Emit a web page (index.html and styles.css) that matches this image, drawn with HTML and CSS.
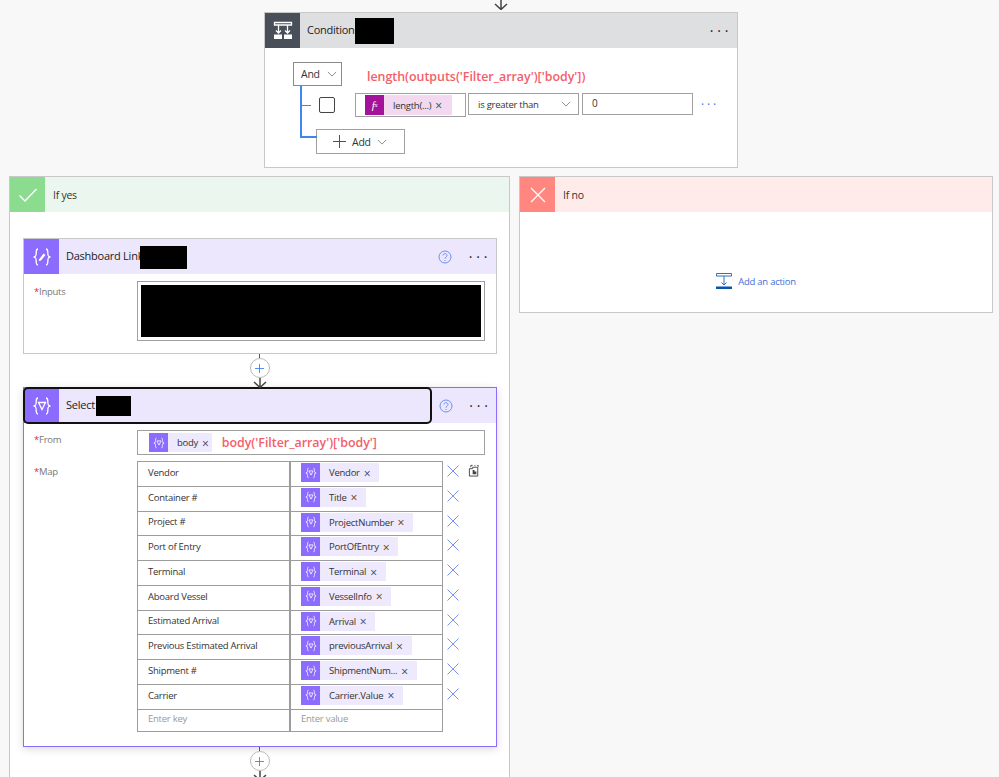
FILE: index.html
```html
<!DOCTYPE html>
<html lang="en">
<head>
    <meta charset="UTF-8">
    <title>Flow editor</title>
    <link rel="stylesheet" href="styles.css">
</head>
<body>

<div class="canvas">
    <svg class="arrow top-arrow" viewBox="0 0 16 10"><path d="M8 0V9M2 4l6 5.500 6-5.500"/></svg>

    <!-- condition -->
    <div class="card condition-card">
        <div class="card-head grey-head">
            <div class="head-icon dark-icon">
                <svg viewBox="0 0 20 20" width="20" height="20"><path class="white-line" d="M1.500 1.500H18.500V4H1.500ZM5.500 4V12M14.500 4V12M3 9.500l2.500 2.500 2.500-2.500M12 9.500l2.500 2.500 2.500-2.500"/><path class="white-fill" d="M1 13.500H9V18H1ZM11 13.500H19V18H11Z"/></svg>
            </div>
            <span class="head-title">Condition</span>
            <div class="redact redact-condition"></div>
            <div class="dots">&middot;&middot;&middot;</div>
        </div>
        <div class="condition-body">
            <div class="and-row">
                <div class="and-box">And <svg class="chev" viewBox="0 0 12 7"><path d="M1 1l5 5 5-5"/></svg></div>
                <div class="red-note cond-note">length(outputs('Filter_array')['body'])</div>
            </div>
            <div class="rule-row">
                <div class="tree-tick"></div>
                <div class="check"></div>
                <div class="rule-input">
                    <div class="chip fx-chip">
                        <span class="chip-icon fx-icon">f<sub>x</sub></span>
                        <span class="chip-text">length(...)</span>
                        <span class="chip-x">&times;</span>
                    </div>
                </div>
                <div class="rule-select">is greater than <svg class="chev" viewBox="0 0 12 7"><path d="M1 1l5 5 5-5"/></svg></div>
                <div class="rule-value">0</div>
                <div class="rule-dots">&middot;&middot;&middot;</div>
            </div>
            <div class="add-row">
                <div class="add-box">
                    <svg class="plus" viewBox="0 0 14 14"><path d="M7 0V14M0 7H14"/></svg>
                    Add
                    <svg class="chev" viewBox="0 0 12 7"><path d="M1 1l5 5 5-5"/></svg>
                </div>
            </div>
        </div>
    </div>

    <div class="branches">
        <!-- yes side -->
        <div class="branch branch-yes">
            <div class="branch-head yes-head">
                <div class="head-icon yes-icon">
                    <svg viewBox="0 0 20 20" width="20" height="20"><path class="white-line" d="M1.500 10.500L7 16 18.500 4"/></svg>
                </div>
                <span class="branch-title">If yes</span>
            </div>
            <div class="branch-body">
                <div class="card action-card dashboard-card">
                    <div class="card-head purple-head">
                        <div class="head-icon purple-icon">
                            <svg viewBox="0 0 20 20" width="20" height="20"><path class="white-line" d="M6 2C3.500 2 4.500 5 4 8 3.800 9.200 3 10 1.500 10 3 10 3.800 10.800 4 12 4.500 15 3.500 18 6 18M14 2C16.500 2 15.500 5 16 8 16.200 9.200 17 10 18.500 10 17 10 16.200 10.800 16 12 15.500 15 16.500 18 14 18"/><path class="white-fill" d="M7 12.500L11.500 6.500 13.500 8 9 13.500 6.800 14Z"/></svg>
                        </div>
                        <span class="head-title">Dashboard Link</span>
                        <div class="redact redact-dashboard"></div>
                        <svg class="help" viewBox="0 0 14 14"><circle cx="7" cy="7" r="6"/><path d="M5 5.500C5 3 9 3 9 5.500 9 7 7 7 7 8.800M7 10v1"/></svg>
                        <div class="dots">&middot;&middot;&middot;</div>
                    </div>
                    <div class="inputs-body">
                        <div class="field-label"><span class="star">*</span>Inputs</div>
                        <div class="inputs-box"><div class="redact-inputs"></div></div>
                    </div>
                </div>

                <div class="connector">
                    <div class="stem"></div>
                    <div class="add-circle"><svg viewBox="0 0 10 10"><path d="M5 0V10M0 5H10"/></svg></div>
                    <svg class="arrow" viewBox="0 0 16 10"><path d="M8 0V9M2 4l6 5.500 6-5.500"/></svg>
                </div>

                <div class="card action-card select-card">
                    <div class="card-head purple-head select-head">
                        <div class="select-focus">
                            <div class="head-icon purple-icon">
                                <svg viewBox="0 0 20 20" width="20" height="20"><path class="white-line" d="M6 2C3.500 2 4.500 5 4 8 3.800 9.200 3 10 1.500 10 3 10 3.800 10.800 4 12 4.500 15 3.500 18 6 18M14 2C16.500 2 15.500 5 16 8 16.200 9.200 17 10 18.500 10 17 10 16.200 10.800 16 12 15.500 15 16.500 18 14 18M6.500 6.500H13.500L10 13.500Z"/></svg>
                            </div>
                            <span class="head-title">Select</span>
                            <div class="redact redact-select"></div>
                        </div>
                        <svg class="help" viewBox="0 0 14 14"><circle cx="7" cy="7" r="6"/><path d="M5 5.500C5 3 9 3 9 5.500 9 7 7 7 7 8.800M7 10v1"/></svg>
                        <div class="dots">&middot;&middot;&middot;</div>
                    </div>
                    <div class="select-body">
                        <div class="field-row">
                            <div class="field-label"><span class="star">*</span>From</div>
                            <div class="from-box">
                                <div class="chip">
                                    <span class="chip-icon"><svg viewBox="0 0 20 20" width="12" height="12"><path class="white-line" d="M6 2C3.500 2 4.500 5 4 8 3.800 9.200 3 10 1.500 10 3 10 3.800 10.800 4 12 4.500 15 3.500 18 6 18M14 2C16.500 2 15.500 5 16 8 16.200 9.200 17 10 18.500 10 17 10 16.200 10.800 16 12 15.500 15 16.500 18 14 18M6.500 6.500H13.500L10 13.500Z"/></svg></span>
                                    <span class="chip-text">body</span>
                                    <span class="chip-x">&times;</span>
                                </div>
                                <span class="red-note from-note">body('Filter_array')['body']</span>
                            </div>
                        </div>
                        <div class="field-row map-row">
                            <div class="field-label map-label"><span class="star">*</span>Map</div>
                            <div class="map-wrap">
                                <div class="map-table" id="map-table"></div>
                                <div class="map-actions" id="map-actions"></div>
                                <svg class="copy-icon" viewBox="0 0 14 14"><path d="M3 3.500V1.500H5M7 1.500H8M10 1.500H11V3M1.500 5V13H10.500V3.500H5V5Z"/><path class="copy-fill" d="M5 6.500H7V11H5ZM7 8H9V11H7Z"/></svg>
                            </div>
                        </div>
                    </div>
                </div>

                <div class="connector bottom-connector">
                    <div class="stem"></div>
                    <div class="add-circle"><svg viewBox="0 0 10 10"><path d="M5 0V10M0 5H10"/></svg></div>
                    <svg class="arrow" viewBox="0 0 16 10"><path d="M8 0V9M2 4l6 5.500 6-5.500"/></svg>
                </div>
            </div>
        </div>

        <!-- no side -->
        <div class="branch branch-no">
            <div class="branch-head no-head">
                <div class="head-icon no-icon">
                    <svg viewBox="0 0 20 20" width="20" height="20"><path class="white-line" d="M3 3L17 17M17 3L3 17"/></svg>
                </div>
                <span class="branch-title">If no</span>
            </div>
            <div class="no-body">
                <div class="add-action">
                    <svg viewBox="0 0 16 16" width="16" height="16"><path class="blue-line" d="M.500.500H15.500V3H.500ZM8 3V11.500M5.500 9.500L8 12 10.500 9.500"/><path class="blue-fill" d="M0 13.500H16V16H0Z"/></svg>
                    <span>Add an action</span>
                </div>
            </div>
        </div>
    </div>
</div>

<script>
    //rows of the map table: key, value
    const rows = [
        ['Vendor', 'Vendor'],
        ['Container #', 'Title'],
        ['Project #', 'ProjectNumber'],
        ['Port of Entry', 'PortOfEntry'],
        ['Terminal', 'Terminal'],
        ['Aboard Vessel', 'VesselInfo'],
        ['Estimated Arrival', 'Arrival'],
        ['Previous Estimated Arrival', 'previousArrival'],
        ['Shipment #', 'ShipmentNum...'],
        ['Carrier', 'Carrier.Value']
    ];
    const tokenIcon = document.querySelector('.from-box .chip-icon').innerHTML;
    const table = document.getElementById('map-table');
    const actions = document.getElementById('map-actions');

    rows.forEach(([key, value]) => {
        table.insertAdjacentHTML('beforeend',
            `<div class="map-cell">${key}</div>
             <div class="map-cell value-cell"><div class="chip">
                <span class="chip-icon">${tokenIcon}</span>
                <span class="chip-text">${value}</span>
                <span class="chip-x">&times;</span>
             </div></div>`);
        actions.insertAdjacentHTML('beforeend',
            '<svg class="row-x" viewBox="0 0 12 12"><path d="M.5.5L11.500 11.500M11.500.5L.5 11.500"/></svg>');
    });
    table.insertAdjacentHTML('beforeend',
        `<div class="map-cell empty-cell">Enter key</div>
         <div class="map-cell empty-cell value-empty">Enter value</div>`);
</script>

</body>
</html>
```

FILE: styles.css
```css
body {
    font-family: "Open Sans", "Noto Sans", sans-serif;
    font-size: 10px;
    letter-spacing: -0.25px;
    color: #333;
    background-color: #f8f8f8;
    margin: 0;
    padding: 0;
}

.canvas {
    width: 999px;
    height: 777px;
    overflow: hidden;
    display: flex;
    flex-direction: column;
    align-items: flex-start;
}

.canvas > * {
    flex: none;
}

.arrow {
    display: block;
    width: 16px;
    height: 10px;
    flex: none;
    fill: none;
    stroke: #444;
    stroke-width: 1.5;
}

.top-arrow {
    margin: 0 0 2px 493px;
}

.card {
    background: #fff;
    border: 1px solid #c8c8c8;
    box-sizing: border-box;
}

.card-head {
    display: flex;
    align-items: center;
    height: 35px;
}

.grey-head {
    background-color: #dedfe1;
}

.purple-head {
    background-color: #ece7fd;
}

.head-icon {
    width: 35px;
    height: 35px;
    flex: none;
    display: flex;
    align-items: center;
    justify-content: center;
}

.dark-icon {
    background-color: #484f58;
}

.purple-icon {
    background-color: #8c6cff;
}

.yes-icon {
    background-color: #8cdc90;
}

.no-icon {
    background-color: #ff8780;
}

.white-line {
    fill: none;
    stroke: #fff;
    stroke-width: 1.3;
}

.white-fill {
    fill: #fff;
}

.head-title {
    margin-left: 7px;
    padding-bottom: 2px;
    font-size: 11px;
    color: #222;
    white-space: nowrap;
}

.redact {
    background-color: #000;
    flex: none;
}

.redact-condition {
    width: 39px;
    height: 26px;
    margin-top: 1px;
}

.redact-dashboard {
    width: 47px;
    height: 23px;
    margin-left: -3px;
    margin-top: 1px;
}

.redact-select {
    width: 35px;
    height: 20px;
    margin-left: 1px;
}

/* the three dots in a card header */
.dots {
    margin-left: auto;
    width: 35px;
    text-align: center;
    text-indent: 3px;
    font-size: 14px;
    line-height: 14px;
    color: #222;
    letter-spacing: 3.800px;
}

.help {
    width: 14px;
    height: 14px;
    margin-left: auto;
    flex: none;
    fill: none;
    stroke: #6e8ff5;
    stroke-width: 1;
}

.help + .dots {
    margin-left: 9px;
}

/* condition card */

.condition-card {
    width: 474px;
    height: 156px;
    margin-left: 264px;
}

.condition-body {
    position: relative;
    padding: 14px 0 0 28px;
}

.and-row {
    display: flex;
    align-items: center;
}

.and-box {
    width: 49px;
    height: 24px;
    box-sizing: border-box;
    border: 1px solid #8a8a8a;
    display: flex;
    align-items: center;
    gap: 7px;
    padding-left: 7px;
    font-size: 10.500px;
    background: #fff;
}

.chev {
    width: 10px;
    height: 6px;
    fill: none;
    stroke: #777;
    stroke-width: 1;
    flex: none;
}

.red-note {
    color: #f2606a;
    font-size: 12.400px;
    font-weight: 600;
    letter-spacing: 0;
    white-space: nowrap;
}

.cond-note {
    margin-left: 25px;
    margin-top: 4px;
}

.rule-row {
    display: flex;
    align-items: center;
    margin-top: 7px;
    height: 24px;
}

/* blue tree lines under the And box */
.tree-tick {
    width: 10px;
    height: 1px;
    margin-left: 8px;
    background-color: #3f86f0;
}

.check {
    width: 14px;
    height: 14px;
    margin-left: 8px;
    border: 1px solid #444;
    border-radius: 2px;
}

.rule-input {
    width: 111px;
    height: 24px;
    box-sizing: border-box;
    margin-left: 20px;
    padding: 1px 0 0 9px;
    border: 1px solid #a0a0a0;
    background: #fff;
}

.rule-select {
    width: 111px;
    height: 22px;
    margin-bottom: 2px;
    box-sizing: border-box;
    margin-left: 2px;
    padding-left: 9px;
    border: 1px solid #a0a0a0;
    display: flex;
    align-items: center;
    justify-content: space-between;
    padding-right: 7px;
    font-size: 9.500px;
}

.rule-value {
    width: 111px;
    height: 22px;
    margin-bottom: 2px;
    box-sizing: border-box;
    margin-left: 3px;
    padding-left: 9px;
    border: 1px solid #a0a0a0;
    line-height: 18px;
}

.rule-dots {
    margin-left: 8px;
    color: #2f7cf0;
    font-size: 12px;
    letter-spacing: 2.800px;
    line-height: 14px;
}

.add-row {
    margin: 12px 0 0 23px;
}

.add-box {
    width: 89px;
    height: 25px;
    box-sizing: border-box;
    border: 1px solid #a0a0a0;
    display: flex;
    align-items: center;
    gap: 6px;
    padding-left: 16px;
    font-size: 10.500px;
    background: #fff;
}

.plus {
    width: 13px;
    height: 13px;
    fill: none;
    stroke: #444;
    stroke-width: 1;
}

.condition-body:before {
    content: "";
    position: absolute;
    left: 35px;
    top: 38px;
    width: 17px;
    height: 52px;
    border-left: 2px solid #3f86f0;
    border-bottom: 2px solid #3f86f0;
    box-sizing: border-box;
}

/* branches */

.branches {
    display: flex;
    align-items: flex-start;
    gap: 9px;
    margin: 8px 0 0 9px;
}

.branch {
    background: #fff;
    border: 1px solid #c8c8c8;
    box-sizing: border-box;
}

.branch-yes {
    width: 501px;
    height: 640px;
}

.branch-no {
    width: 474px;
    height: 137px;
}

.branch-head {
    display: flex;
    align-items: center;
    height: 35px;
}

.yes-head {
    background-color: #ebf7ee;
}

.no-head {
    background-color: #ffebe9;
}

.branch-title {
    margin-left: 8px;
    font-size: 10.500px;
}

.branch-body {
    padding: 26px 13px 0 13px;
}

.no-body {
    display: flex;
    justify-content: center;
    padding-top: 61px;
}

.add-action {
    display: flex;
    align-items: center;
    gap: 6px;
    color: #3f6fd8;
    font-size: 9.500px;
}

.blue-line {
    fill: none;
    stroke: #2a72c8;
    stroke-width: 1;
}

.blue-fill {
    fill: #0b53ad;
}

/* action cards */

.action-card {
    width: 474px;
}

.dashboard-card {
    height: 116px;
}

.inputs-body {
    display: flex;
    justify-content: space-between;
    padding: 7px 11px 0 10px;
}

.field-label {
    color: #777;
    font-size: 9.500px;
    padding-top: 3px;
}

.inputs-body .field-label {
    padding-top: 4px;
}

.map-label {
    padding-top: 4px;
}

.star {
    color: #d03030;
}

.inputs-box {
    width: 348px;
    height: 60px;
    box-sizing: border-box;
    padding: 3px;
    border: 1px solid #a0a0a0;
}

.redact-inputs {
    height: 52px;
    background-color: #000;
}

.connector {
    display: flex;
    flex-direction: column;
    align-items: center;
    height: 33px;
    position: relative;
    z-index: 2;
}

.bottom-connector {
    height: 30px;
}

.stem {
    width: 1px;
    height: 4px;
    flex: none;
    background-color: #555;
}

.add-circle {
    width: 18px;
    height: 18px;
    flex: none;
    border: 1px solid #bbb;
    border-radius: 50%;
    background: #fff;
    display: flex;
    align-items: center;
    justify-content: center;
}

.add-circle svg {
    width: 9px;
    height: 9px;
    fill: none;
    stroke: #3f86f0;
    stroke-width: 1;
}

/* select card */

.select-card {
    height: 360px;
    border: 1px solid #8c6cff;
    box-shadow: 0 2px 8px rgba(0,0,0,0.15);
}

.select-head {
    height: 35px;
}

.select-focus {
    flex: none;
    width: 407px;
    height: 35px;
    box-sizing: border-box;
    outline: 2px solid #111;
    outline-offset: -1px;
    border-radius: 4px;
    display: flex;
    align-items: center;
}

.select-head .help {
    margin-left: 8px;
}

.select-body {
    padding: 7px 11px 0 10px;
}

.field-row {
    display: flex;
    justify-content: space-between;
}

.from-box {
    width: 348px;
    height: 25px;
    box-sizing: border-box;
    border: 1px solid #a0a0a0;
    display: flex;
    align-items: center;
    padding-left: 11px;
}

.from-box .chip {
    padding-right: 3px;
}

.from-note {
    margin-left: 10px;
}

.map-row {
    margin-top: 6px;
}

.map-wrap {
    width: 348px;
    display: flex;
    position: relative;
}

.map-table {
    width: 306px;
    box-sizing: border-box;
    border: 1px solid #9c9c9c;
    display: grid;
    grid-template-columns: 151px 1fr;
    grid-template-rows: repeat(10, 24.750px) 21px;
}

.map-cell {
    display: flex;
    align-items: center;
    padding: 0 0 3px 10px;
    border-bottom: 1px solid #9c9c9c;
    box-sizing: border-box;
    color: #333;
    font-size: 9.500px;
    white-space: nowrap;
}

.value-cell {
    border-left: 2px solid #9c9c9c;
    align-items: flex-start;
    padding-top: 1px;
}

.empty-cell {
    color: #999;
    border-bottom: none;
}

.value-empty {
    border-left: 2px solid #9c9c9c;
}

.map-actions {
    display: flex;
    flex-direction: column;
    margin-left: 4px;
}

.row-x {
    width: 12px;
    height: 12px;
    margin: 4px 0 8.750px;
    flex: none;
    fill: none;
    stroke: #7a94f0;
    stroke-width: 1;
}

.copy-icon {
    width: 13px;
    height: 13px;
    position: absolute;
    left: 331px;
    top: 3px;
    fill: none;
    stroke: #444;
    stroke-width: 1;
}

.copy-fill {
    fill: #444;
    stroke: none;
}

/* tokens */

.chip {
    display: inline-flex;
    align-items: center;
    height: 19px;
    background-color: #eee9fc;
    padding-right: 9px;
}

.chip-icon {
    width: 19px;
    height: 19px;
    flex: none;
    display: flex;
    align-items: center;
    justify-content: center;
    background-color: #8c6cff;
    margin-right: 9px;
}

.chip-text {
    font-size: 9.500px;
    color: #333;
    white-space: nowrap;
}

.chip-x {
    margin-left: 4px;
    padding-top: 2px;
    font-size: 12px;
    line-height: 12px;
    color: #444;
}

.fx-chip {
    background-color: #f2d9ef;
    width: 87px;
    height: 20px;
    box-sizing: border-box;
}

.fx-icon {
    height: 20px;
    background-color: #a4129a;
    color: #fff;
    font-family: "Liberation Serif", serif;
    font-style: italic;
    font-size: 11px;
}

.fx-icon sub {
    font-size: 7px;
}
```
